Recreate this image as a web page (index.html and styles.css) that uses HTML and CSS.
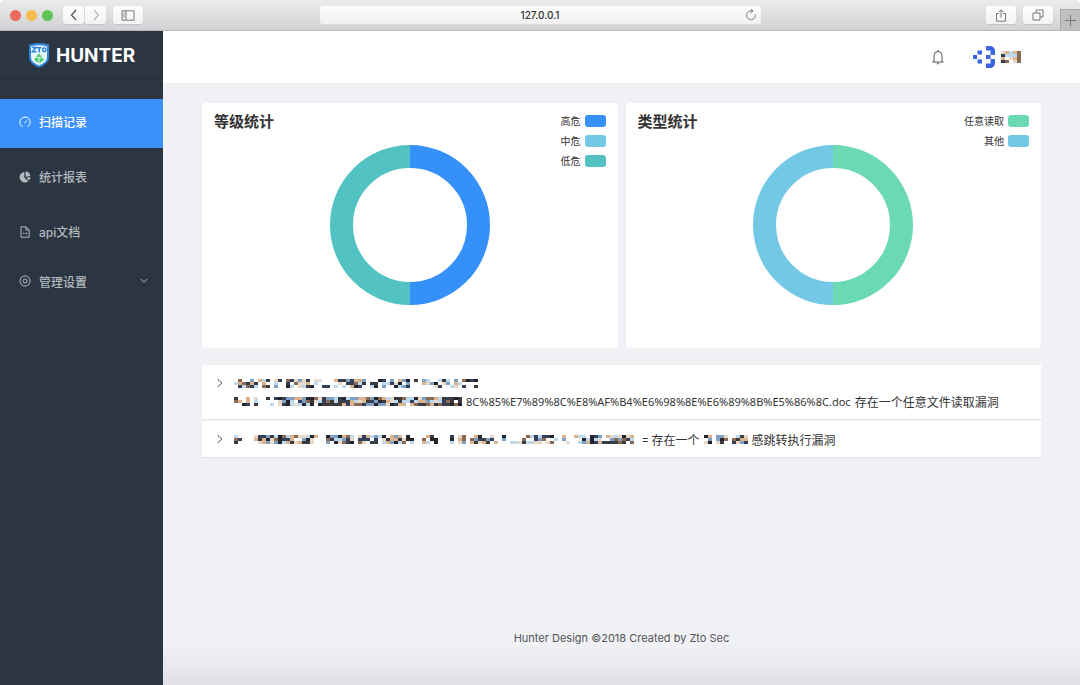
FILE: index.html
```html
<!DOCTYPE html>
<html lang="zh-CN">
<head>
<meta charset="utf-8">
<title>Hunter</title>
<link rel="stylesheet" href="styles.css">
</head>
<body>
<div class="window">
  <div class="toolbar">
    <div class="toolbar-side">
      <span class="light light-red"></span>
      <span class="light light-yellow"></span>
      <span class="light light-green"></span>
      <div class="nav-buttons">
        <button class="tool nav" aria-label="Back"><svg width="10" height="12" viewBox="0 0 10 12"><path d="M7 1 2.500 6 7 11" stroke="#555" stroke-width="1.300"/></svg></button>
        <button class="tool nav" aria-label="Forward"><svg width="10" height="12" viewBox="0 0 10 12"><path d="M3 1 7.500 6 3 11" stroke="#bbb" stroke-width="1.300"/></svg></button>
      </div>
      <button class="tool" aria-label="Sidebar"><svg width="14" height="11" viewBox="0 0 14 11"><path d="M1 .8h12v9.400H1zM5 1v9M2.200 3h1.500M2.200 5h1.500M2.200 7h1.500" stroke="#777"/></svg></button>
    </div>
    <div class="address">
      <input class="address-input" type="text" value="127.0.0.1" aria-label="Address">
      <button class="reload" aria-label="Reload"><svg width="12" height="12" viewBox="0 0 12 12"><path d="M10.300 5.500A4.400 4.400 0 1 1 6 1.900h1.500M5.600 0 8 2 5.600 4" stroke="#777"/></svg></button>
    </div>
    <div class="toolbar-side toolbar-right">
      <button class="tool" aria-label="Share"><svg width="12" height="13" viewBox="0 0 12 13"><path d="M4 4.500H1.500v7.700h9V4.500H8M6 8.500V1M3.800 3 6 .8 8.200 3" stroke="#777"/></svg></button>
      <button class="tool" aria-label="Tabs"><svg width="12" height="12" viewBox="0 0 12 12"><path d="M4 4V1h7v7H8M1 4h7v7H1z" stroke="#777"/></svg></button>
      <button class="new-tab" aria-label="New tab"><svg width="11" height="11" viewBox="0 0 11 11"><path d="M5.500 0v11M0 5.500h11" stroke="#777"/></svg></button>
    </div>
  </div>

  <div class="app">
    <aside class="sidebar">
      <div class="brand">
        <svg width="22" height="26" viewBox="0 0 22 26"><path d="M1 2.500Q11-.5 21 2.500V15q0 7-10 10.500Q1 22 1 15z" fill="#2f86dc"/><path d="M3 4.500q8-2.500 16 0V15q0 5.500-8 8.500-8-3-8-8.500z" fill="#eaf6ff"/><path d="M4 5.500h4L4.500 9.700h4M9 5.700h4.500M11.200 6v4.300" stroke="#2f86dc" stroke-width="1.600"/><rect x="14.600" y="6" width="3.300" height="3.600" rx="1.500" stroke="#2f86dc" stroke-width="1.500"/><path d="M11 11.200 14 15H8zM7 15.800h3.500v5.400L6.300 18zM11.500 15.800H15l.9 2.400-4.400 3z" fill="#50cf76"/></svg>
        <span>HUNTER</span>
      </div>
      <nav class="menu">
        <a class="item active" href="#scan"><svg width="12" height="12" viewBox="0 0 12 12"><path d="M2.600 10.200A5.200 5.200 0 1 1 9.400 10.200H8.400M2.600 10.200h1M5.500 7.200 8 4.500"/></svg><span>扫描记录</span></a>
        <a class="item" href="#report"><svg width="12" height="12" viewBox="0 0 12 12"><path d="M5.300 1v5.500l4 3.800A5.300 5.300 0 1 1 5.300 1z" fill="currentColor" stroke="none"/><path d="M6.500.5A5.200 5.200 0 0 1 11.400 5L6.500 5.800zM7.200 6.700l4.300-.6A5 5 0 0 1 10 9.600z" fill="currentColor" stroke="none"/></svg><span>统计报表</span></a>
        <a class="item" href="#api"><svg width="12" height="12" viewBox="0 0 12 12"><path d="M2 .8h5L10.200 4v7.200H2zM7 .8V4h3.200M3.800 7.300h1.400M5.800 7.300h2.600"/></svg><span>api文档</span></a>
        <a class="item last" href="#settings"><svg width="12" height="12" viewBox="0 0 12 12"><path d="M4.500 1h3l2.500 1.800L11.200 6 10 9.200 7.500 11h-3L2 9.200.8 6 2 2.800z"/><circle cx="6" cy="6" r="2"/></svg><span>管理设置</span><svg class="chevron" width="8" height="6" viewBox="0 0 8 6"><path d="M1 1.200 4 4.300l3-3.100"/></svg></a>
      </nav>
    </aside>

    <div class="page">
      <header class="header">
        <button class="bell" aria-label="Notifications"><svg width="14" height="16" viewBox="0 0 14 16"><path d="M1.500 13h11M3 13V6.500a4 4 0 0 1 8 0V13M7 2.500V1M5.800 14.700h2.400"/></svg></button>
        <div class="user">
          <svg width="24" height="24" viewBox="0 0 24 24"><path fill="#3d64e0" d="M1 10h4v4H1zM5.500 5.500h4.500v4H5.500zM5.500 14.500h4.500v4H5.500zM14 1h5q4 1 4 5v4h-4.500V5.500H14zM14 10h4.500v4H14zM18.500 14H23v4q0 4-4 5h-5v-4.500h4.500z"/></svg>
          <svg class="mosaic" data-shade="97799" data-rows="4" height="12" role="img" aria-label="User name"></svg>
        </div>
      </header>

      <main class="content">
        <section class="charts">
          <article class="card">
            <h2>等级统计</h2>
            <svg class="donut" width="160" height="160" viewBox="0 0 160 160" role="img" aria-label="等级统计"><path d="M80 11.500a68.500 68.500 0 0 1 0 137" stroke="#3690fa"/><path d="M80 148.500a68.500 68.500 0 0 1 0-137" stroke="#52c2c3"/></svg>
            <ul class="legend">
              <li>高危<i class="blue"></i></li>
              <li>中危<i class="sky"></i></li>
              <li>低危<i class="teal"></i></li>
            </ul>
          </article>
          <article class="card">
            <h2>类型统计</h2>
            <svg class="donut" width="160" height="160" viewBox="0 0 160 160" role="img" aria-label="类型统计"><path d="M80 11.500a68.500 68.500 0 0 1 0 137" stroke="#6bd9b1"/><path d="M80 148.500a68.500 68.500 0 0 1 0-137" stroke="#72c8e5"/></svg>
            <ul class="legend">
              <li>任意读取<i class="green"></i></li>
              <li>其他<i class="sky"></i></li>
            </ul>
          </article>
        </section>

        <section class="results">
          <div class="result">
            <button class="expand" aria-label="展开"><svg width="8" height="10" viewBox="0 0 8 10"><path d="M1.500 1.200 6 5 1.500 8.800"/></svg></button>
            <div class="lines">
              <p><svg class="mosaic" data-shade="7667766760877767776663443557767776653357676665367878665576532" data-rows="3" height="9"></svg></p>
              <p><svg class="mosaic" data-shade="666445024688998788997898999999999999889799988999989989968" data-rows="3" height="9"></svg><span class="url">8C%85%E7%89%8C%E8%AF%B4%E6%98%8E%E6%89%8B%E5%86%8C.doc</span><span>存在一个任意文件读取漏洞</span></p>
            </div>
          </div>
          <div class="result">
            <button class="expand" aria-label="展开"><svg width="8" height="10" viewBox="0 0 8 10"><path d="M1.500 1.200 6 5 1.500 8.800"/></svg></button>
            <div class="lines">
              <p><svg class="mosaic" data-shade="66302577899788987776700667788707667777788875543555420070777667667535355567678776633346788888888877760" data-rows="3" height="9"></svg><span>= 存在一个</span><svg class="mosaic" data-shade="76075607789" data-rows="3" height="9"></svg><span>感跳转执行漏洞</span></p>
            </div>
          </div>
        </section>
      </main>

      <footer class="footer">Hunter Design ©2018 Created by Zto Sec</footer>
    </div>
  </div>
</div>
<script src="mosaic.js"></script>
</body>
</html>
```

FILE: styles.css
```css
* { box-sizing: border-box; }
body { margin: 0; font-family: Inter, "Noto Sans CJK SC", sans-serif; font-size: 12px; color: #333; }
button { border: 0; padding: 0; background: none; font: inherit; display: flex; align-items: center; justify-content: center; }
svg { display: block; flex: none; fill: none; }
.window { min-height: 100vh; display: flex; flex-direction: column; }

.toolbar { height: 31px; display: grid; grid-template-columns: 1fr minmax(0, 441px) 1fr; align-items: center; background: linear-gradient(#ebebec, #d2d2d4); border-bottom: 1px solid #b8b8ba; border-radius: 5px 5px 0 0; }
.toolbar-side { display: flex; align-items: center; padding-left: 10px; align-self: stretch; }
.light { width: 11px; height: 11px; border-radius: 50%; margin-right: 5px; }
.light-red { background: #ed6a5f; }
.light-yellow { background: #f5bd50; }
.light-green { background: #5fc454; }
.nav-buttons { display: flex; gap: 1px; margin: 0 7px 0 5px; }
.tool { width: 30px; height: 18px; border-radius: 3px; background: linear-gradient(#fdfdfd, #f3f3f3); box-shadow: 0 1px 1px #c3c3c5; }
.nav { width: 21px; }
.address { height: 18px; display: flex; border-radius: 3px; background: linear-gradient(#fdfdfd, #f1f1f1); padding-right: 4px; }
.address-input { flex: 1; min-width: 0; border: 0; padding: 0 0 0 16px; background: none; text-align: center; font: 500 10px Inter, sans-serif; color: #333; }
.reload { width: 12px; }
.toolbar-right { justify-content: flex-end; gap: 7px; padding: 0; }
.new-tab { width: 20px; align-self: flex-end; height: 21px; background: #bfbfc1; border: 1px solid #aaaaac; border-width: 1px 0 0 1px; }

.app { flex: 1; display: flex; }
.sidebar { flex: 0 0 163px; background: #2b3642; color: #b2b8bd; }
.brand { height: 49px; display: flex; align-items: center; gap: 6px; padding-left: 28px; border-bottom: 1px solid #24303b; color: #fff; font-size: 19px; font-weight: 700; }
.menu { padding-top: 19px; display: flex; flex-direction: column; gap: 6px; }
.item { height: 49px; padding: 0 15px 4px 19px; display: flex; align-items: center; gap: 8px; color: inherit; text-decoration: none; font-weight: 500; }
.item svg { stroke: currentColor; }
.last { height: 38px; }
.active { background: #3a91fb; color: #fff; }
.item .chevron { margin-left: auto; }

.page { flex: 1; min-width: 0; display: flex; flex-direction: column; background: linear-gradient(#eff1f5 0 94%, #dfe1e4); }
.header { height: 52px; background: #fff; display: flex; align-items: center; justify-content: flex-end; gap: 27px; padding-right: 59px; }
.bell svg { stroke: #555; }
.user { display: flex; align-items: center; gap: 5px; }
.content { flex: 1; padding: 20px 39px; display: flex; flex-direction: column; gap: 17px; }
.charts { display: grid; grid-template-columns: 1fr 1fr; gap: 8px; }
.card { min-height: 245px; padding: 8px 12px; background: #fff; border-radius: 4px; display: grid; grid-template-columns: 1fr 160px 1fr; }
.card h2 { margin: 0; font-size: 15px; line-height: 22px; font-weight: 700; color: #333; }
.donut { margin-top: 34px; stroke-width: 23px; }
.legend { list-style: none; margin: 0; padding: 0; display: flex; flex-direction: column; gap: 1px; font-size: 10px; line-height: 18px; }
.legend li { height: 19px; display: flex; align-items: center; justify-content: flex-end; gap: 4px; }
.legend i { width: 21px; height: 12px; border-radius: 3px; }
.blue { background: #3690fa; }
.sky { background: #72c8e5; }
.teal { background: #52c2c3; }
.green { background: #6bd9b1; }

.results { display: flex; flex-direction: column; gap: 1px; }
.result { display: flex; align-items: flex-start; gap: 10px; padding: 9px 14px; background: #fff; border-bottom: 1px solid #e1e4e8; }
.expand { height: 18px; }
.expand svg { stroke: #555; }
.lines { flex: 1; min-width: 0; font-family: Roboto, "Noto Sans CJK SC", sans-serif; }
.lines p { margin: 0; height: 18px; display: flex; align-items: center; gap: 4px; white-space: nowrap; }
.url { font-family: "Noto Sans", sans-serif; font-size: 11px; }
.footer { padding: 0 0 38px; text-align: center; line-height: 18px; font-size: 11px; color: #555; }
```

FILE: mosaic.js
```js
// Fills each censored strip with small blocks; a digit sets how dense its column is.
const tones = ["#24242c", "#34405a", "#8a6a52", "#7da0c4", "#d9b48c", "#bcd9ee", "#3c3a3c", "#e9d9c8"];
let seed = 7;
function next() {
  seed = (seed * 16807) % 2147483647;
  return seed / 2147483647;
}
document.querySelectorAll(".mosaic").forEach((svg) => {
  const cell = 4;
  const rowHeight = 3;
  const columns = svg.dataset.shade;
  svg.setAttribute("width", columns.length * cell);
  [...columns].forEach((digit, x) => {
    for (let y = 0; y < Number(svg.dataset.rows); y++) {
      if (next() * 9 > Number(digit)) continue;
      const block = document.createElementNS("http://www.w3.org/2000/svg", "rect");
      block.setAttribute("x", x * cell);
      block.setAttribute("y", y * rowHeight);
      block.setAttribute("width", cell);
      block.setAttribute("height", rowHeight);
      block.setAttribute("fill", tones[Math.floor(next() * tones.length)]);
      svg.append(block);
    }
  });
});
```
